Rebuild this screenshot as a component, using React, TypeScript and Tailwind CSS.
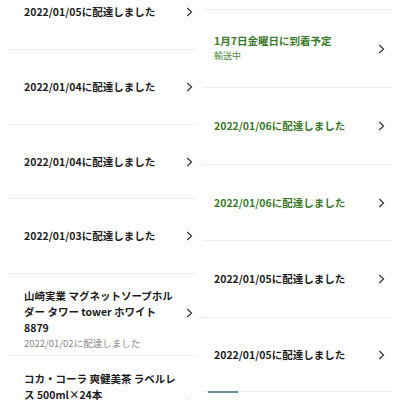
const font = { fontFamily: '"Noto Sans CJK JP", "Noto Sans", sans-serif' }

function Chevron() {
    return (
        <svg width="7" height="10" viewBox="0 0 7 10" className="shrink-0">
            <polyline points="1.2,1 5.6,5 1.2,9" fill="none" stroke="#2a2a2a" strokeWidth="1.1" />
        </svg>
    )
}

type Row = {
    title: string
    sub?: string
    green?: boolean
    h: string
}

const left: Row[] = [
    { title: '2022/01/05に配達しました', h: 'h-[75px]' },
    { title: '2022/01/04に配達しました', h: 'h-[75px]' },
    { title: '2022/01/04に配達しました', h: 'h-[74px]' },
    { title: '2022/01/03に配達しました', h: 'h-[75px]' },
]

const right: Row[] = [
    { title: '1月7日金曜日に到着予定', sub: '輸送中', green: true, h: 'h-[78px]' },
    { title: '2022/01/06に配達しました', green: true, h: 'h-[77px]' },
    { title: '2022/01/06に配達しました', green: true, h: 'h-[76px]' },
    { title: '2022/01/05に配達しました', h: 'h-[77px]' },
    { title: '2022/01/05に配達しました', h: 'h-[74px]' },
]

const titleCls = 'text-[10.5px] font-semibold text-[#1c1c1c] leading-[16px]'

export default function App() {
    return (
        <div className="w-[400px] h-[400px] bg-white flex overflow-hidden" style={font}>
            {/* left list */}
            <div className="w-[200px] shrink-0 overflow-hidden">
                <div className="-mt-[25px] ml-[8px] mr-[3px]">
                    {left.map((r, i) => (
                        <div key={i} className={`${r.h} border-b border-[#ededed] flex items-center pl-[16px] pr-[4px]`}>
                            <div className="flex-1 text-[10.5px] font-semibold text-[#1c1c1c] leading-[14px]">{r.title}</div>
                            <Chevron />
                        </div>
                    ))}
                    <div className="h-[82px] border-b border-[#ededed] flex items-start pt-[14px] pl-[16px] pr-[4px]">
                        <div className="flex-1 whitespace-nowrap">
                            <div className={titleCls}>山崎実業 マグネットソープホル</div>
                            <div className={titleCls}>ダー タワー tower ホワイト</div>
                            <div className={titleCls}>8879</div>
                            <div className="text-[9.5px] text-[#8a8a8a] leading-[14px]">2022/01/02に配達しました</div>
                        </div>
                        <div className="pt-[20px]">
                            <Chevron />
                        </div>
                    </div>
                    <div className="h-[81px] flex items-start pt-[15px] pl-[16px] pr-[4px]">
                        <div className="flex-1 whitespace-nowrap">
                            <div className={titleCls}>コカ・コーラ 爽健美茶 ラベルレ</div>
                            <div className={titleCls}>ス 500ml×24本</div>
                        </div>
                        <div className="pt-[28px]">
                            <Chevron />
                        </div>
                    </div>
                </div>
            </div>

            {/* right list */}
            <div className="w-[200px] shrink-0 overflow-hidden pt-[9px]">
                <div className="ml-[2px] mr-[8px] border-t border-[#ededed]">
                    {right.map((r, i) => (
                        <div key={i} className={`${r.h} border-b border-[#ededed] flex items-center pl-[12px] pr-[7px]`}>
                            <div className="flex-1">
                                <div className={`text-[10.5px] font-semibold leading-[14px] ${r.green ? 'text-[#3a7a2a]' : 'text-[#1c1c1c]'}`}>
                                    {r.title}
                                </div>
                                {r.sub && <div className="text-[9px] text-[#4f8a40] leading-[14px] mt-[1px]">{r.sub}</div>}
                            </div>
                            <Chevron />
                        </div>
                    ))}
                    <div className="-mt-[1px] ml-[6px] w-[30px] h-[2px] bg-[#6f8fa0]" />
                </div>
            </div>
        </div>
    )
}
